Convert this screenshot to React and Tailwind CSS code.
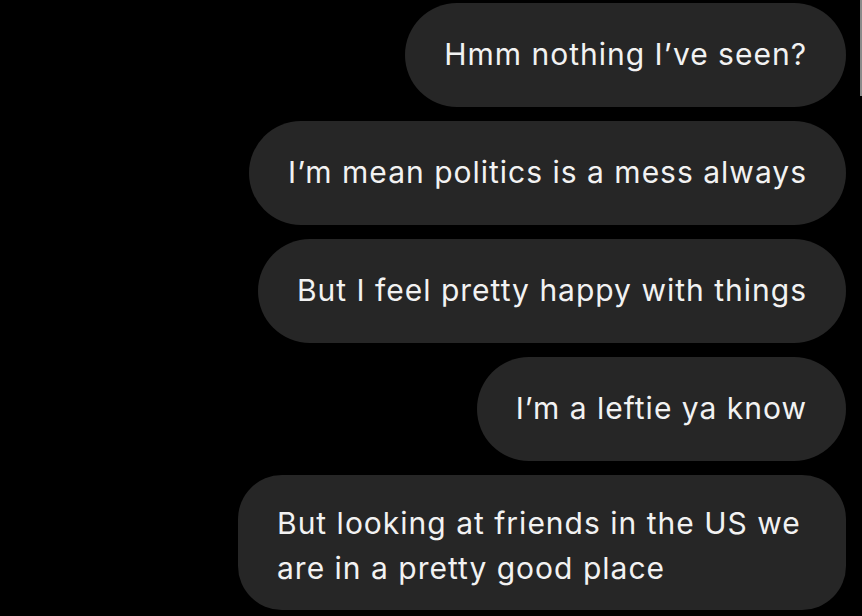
const messages = [
  { id: 1, text: 'Hmm nothing I’ve seen?' },
  { id: 2, text: 'I’m mean politics is a mess always' },
  { id: 3, text: 'But I feel pretty happy with things' },
  { id: 4, text: 'I’m a leftie ya know' },
];

function Bubble({ children, className = '' }) {
  return (
    <div
      className={`bg-[#262626] text-[#f2f2f2] px-[39px] text-[30px] leading-[45px] tracking-[1px] ${className}`}
    >
      {children}
    </div>
  );
}

export default function App() {
  return (
    <div
      className="relative w-[862px] h-[616px] bg-black overflow-hidden"
      style={{ fontFamily: 'Inter, "Noto Sans", sans-serif' }}
    >
      <div className="flex flex-col items-end gap-[14px] pt-[3px] pr-[16px]">
        {messages.map((m) => (
          <Bubble key={m.id} className="h-[104px] pt-[29px] pb-[30px] rounded-[52px]">
            {m.text}
          </Bubble>
        ))}
        <Bubble className="w-[608px] pt-[26px] pb-[19px] rounded-[44px]">
          But looking at friends in the US we
          <br />
          are in a pretty good place
        </Bubble>
      </div>
      {/* scroll indicator */}
      <div className="absolute right-0 top-0 w-[2px] h-[96px] bg-[#8a8a8a]" />
    </div>
  );
}
